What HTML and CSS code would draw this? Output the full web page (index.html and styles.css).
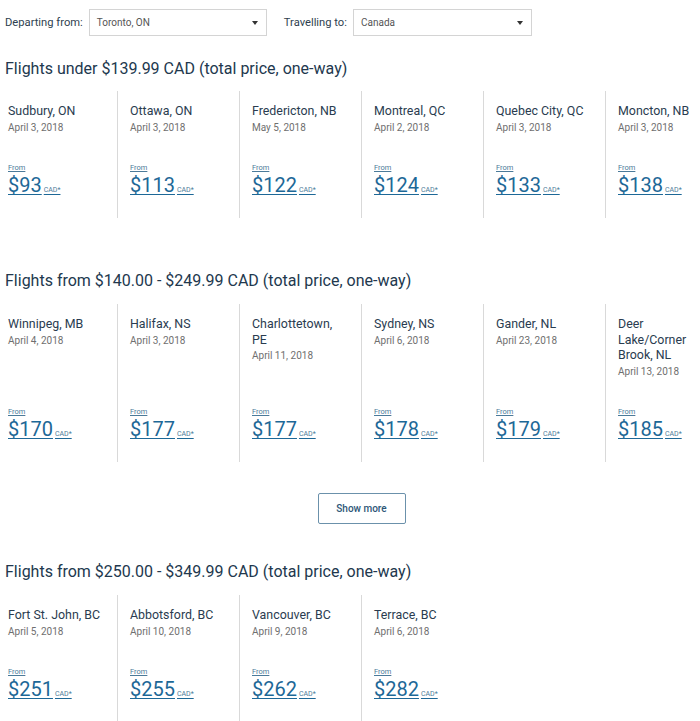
FILE: index.html
```html
<!DOCTYPE html>
<html lang="en">
<head>
<meta charset="utf-8">
<title>Flights</title>
<link rel="stylesheet" href="styles.css">
</head>
<body>
<div class="filters">
  <span class="label">Departing from:</span>
  <div class="select sel-from"><span>Toronto, ON</span><i class="caret"></i></div>
  <span class="label label-to">Travelling to:</span>
  <div class="select sel-to"><span>Canada</span><i class="caret"></i></div>
</div>

<section class="group first">
  <h2 class="title">Flights under $139.99 CAD (total price, one-way)</h2>
  <div class="cards">
    <div class="card"><div class="info"><div class="city">Sudbury, ON</div><div class="date">April 3, 2018</div></div><a class="fare" href="#"><span class="from">From</span><span class="price">$93<small>CAD*</small></span></a></div>
    <div class="card"><div class="info"><div class="city">Ottawa, ON</div><div class="date">April 3, 2018</div></div><a class="fare" href="#"><span class="from">From</span><span class="price">$113<small>CAD*</small></span></a></div>
    <div class="card"><div class="info"><div class="city">Fredericton, NB</div><div class="date">May 5, 2018</div></div><a class="fare" href="#"><span class="from">From</span><span class="price">$122<small>CAD*</small></span></a></div>
    <div class="card"><div class="info"><div class="city">Montreal, QC</div><div class="date">April 2, 2018</div></div><a class="fare" href="#"><span class="from">From</span><span class="price">$124<small>CAD*</small></span></a></div>
    <div class="card"><div class="info"><div class="city">Quebec City, QC</div><div class="date">April 3, 2018</div></div><a class="fare" href="#"><span class="from">From</span><span class="price">$133<small>CAD*</small></span></a></div>
    <div class="card"><div class="info"><div class="city">Moncton, NB</div><div class="date">April 3, 2018</div></div><a class="fare" href="#"><span class="from">From</span><span class="price">$138<small>CAD*</small></span></a></div>
  </div>
</section>

<section class="group">
  <h2 class="title">Flights from $140.00 - $249.99 CAD (total price, one-way)</h2>
  <div class="cards">
    <div class="card"><div class="info"><div class="city">Winnipeg, MB</div><div class="date">April 4, 2018</div></div><a class="fare" href="#"><span class="from">From</span><span class="price">$170<small>CAD*</small></span></a></div>
    <div class="card"><div class="info"><div class="city">Halifax, NS</div><div class="date">April 3, 2018</div></div><a class="fare" href="#"><span class="from">From</span><span class="price">$177<small>CAD*</small></span></a></div>
    <div class="card"><div class="info"><div class="city">Charlottetown, PE</div><div class="date">April 11, 2018</div></div><a class="fare" href="#"><span class="from">From</span><span class="price">$177<small>CAD*</small></span></a></div>
    <div class="card"><div class="info"><div class="city">Sydney, NS</div><div class="date">April 6, 2018</div></div><a class="fare" href="#"><span class="from">From</span><span class="price">$178<small>CAD*</small></span></a></div>
    <div class="card"><div class="info"><div class="city">Gander, NL</div><div class="date">April 23, 2018</div></div><a class="fare" href="#"><span class="from">From</span><span class="price">$179<small>CAD*</small></span></a></div>
    <div class="card"><div class="info"><div class="city">Deer Lake/Corner Brook, NL</div><div class="date">April 13, 2018</div></div><a class="fare" href="#"><span class="from">From</span><span class="price">$185<small>CAD*</small></span></a></div>
  </div>
  <div class="more"><button class="more-btn" type="button">Show more</button></div>
</section>

<section class="group">
  <h2 class="title">Flights from $250.00 - $349.99 CAD (total price, one-way)</h2>
  <div class="cards">
    <div class="card"><div class="info"><div class="city">Fort St. John, BC</div><div class="date">April 5, 2018</div></div><a class="fare" href="#"><span class="from">From</span><span class="price">$251<small>CAD*</small></span></a></div>
    <div class="card"><div class="info"><div class="city">Abbotsford, BC</div><div class="date">April 10, 2018</div></div><a class="fare" href="#"><span class="from">From</span><span class="price">$255<small>CAD*</small></span></a></div>
    <div class="card"><div class="info"><div class="city">Vancouver, BC</div><div class="date">April 9, 2018</div></div><a class="fare" href="#"><span class="from">From</span><span class="price">$262<small>CAD*</small></span></a></div>
    <div class="card"><div class="info"><div class="city">Terrace, BC</div><div class="date">April 6, 2018</div></div><a class="fare" href="#"><span class="from">From</span><span class="price">$282<small>CAD*</small></span></a></div>
  </div>
</section>
</body>
</html>
```

FILE: styles.css
```css
* { box-sizing: border-box; }
html, body { margin: 0; padding: 0; background: #fff; }
body {
  font-family: Roboto, "Liberation Sans", Arial, sans-serif;
  color: #2a3c50;
  overflow: hidden;
}

.filters {
  display: flex;
  align-items: center;
  padding: 9px 5px 0 5px;
}
.label {
  font-size: 11.2px;
  color: #2f3f50;
}
.label-to { margin-left: 17px; }
.select {
  display: flex;
  align-items: center;
  justify-content: space-between;
  height: 27px;
  margin-left: 6px;
  padding: 0 8px 0 7px;
  border: 1px solid #d4d4d4;
  background: #fff;
  font-size: 10px;
  color: #555;
}
.sel-from { width: 178px; }
.sel-to { width: 179px; }
.caret {
  width: 0;
  height: 0;
  border-left: 3.5px solid transparent;
  border-right: 3.5px solid transparent;
  border-top: 4px solid #333;
}

.group.first { margin-top: 22px; }
.group + .group { margin-top: 52px; }
.group:has(.more) + .group { margin-top: 0; }

.title {
  margin: 0 0 12px 5px;
  font-size: 16px;
  line-height: 22px;
  font-weight: 400;
  color: #22384e;
}
.group.first .title { margin-bottom: 11px; }

.cards {
  display: grid;
  grid-template-columns: repeat(6, 118px);
  column-gap: 4px;
}
.card {
  display: flex;
  flex-direction: column;
  justify-content: space-between;
  padding: 12px 15px 21px 8px;
  border-right: 1px solid #d9d9d9;
}
.card:last-child { border-right: none; }
.info { margin-bottom: 27.5px; }
.city {
  font-size: 12.4px;
  line-height: 15.5px;
  color: #2a3c50;
}
.date {
  font-size: 10px;
  line-height: 17px;
  color: #6f6f6f;
}
.fare {
  display: flex;
  flex-direction: column;
  align-items: flex-start;
  color: #1f6a96;
  text-decoration: none;
}
.from {
  font-size: 7.5px;
  line-height: 10px;
  color: #4b7a99;
  text-decoration: underline;
}
.price {
  display: block;
  height: 24px;
  font-size: 20px;
  line-height: 24px;
  font-weight: 400;
  color: #1d6897;
  text-decoration: underline;
  text-decoration-thickness: 1px;
  text-underline-offset: 2px;
  white-space: nowrap;
}
.price small {
  font-size: 7px;
  line-height: 1;
  margin-left: 2px;
  color: #4b7a99;
}

.more {
  display: flex;
  justify-content: center;
  padding: 31px 0 37px 23px;
}
.more-btn {
  width: 88px;
  height: 31px;
  border: 1px solid #6b91ab;
  border-radius: 2px;
  background: #fff;
  font-family: Roboto, "Liberation Sans", Arial, sans-serif;
  font-size: 10px;
  font-weight: 500;
  color: #2d5677;
  cursor: pointer;
}
```
